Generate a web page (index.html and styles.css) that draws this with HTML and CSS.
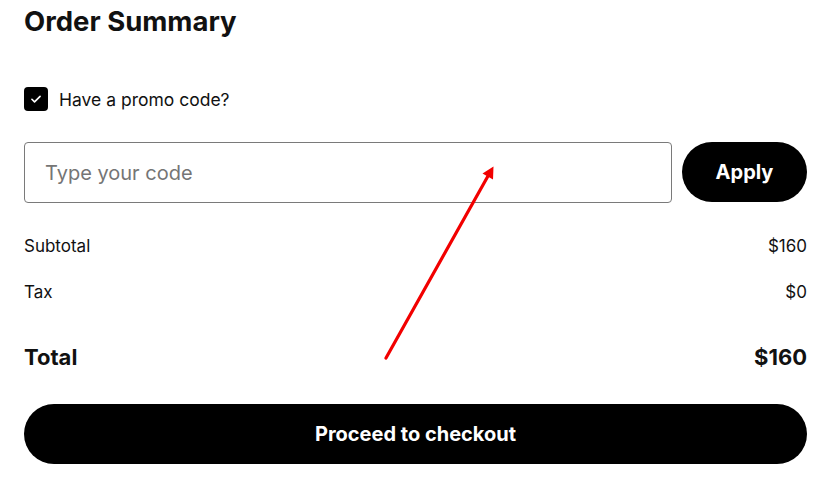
FILE: index.html
```html
<!DOCTYPE html>
<html lang="en">
<head>
<meta charset="utf-8">
<title>Order Summary</title>
<link rel="stylesheet" href="styles.css">
</head>
<body>
<main class="summary">
  <h1 class="title">Order Summary</h1>
  <label class="promo-toggle">
    <span class="check">
      <svg viewBox="0 0 24 24" width="14" height="14" aria-hidden="true"><path d="M5 12.5l4.5 4.5L19 7.5" fill="none" stroke="#fff" stroke-width="2.8" stroke-linecap="round" stroke-linejoin="round"/></svg>
    </span>
    <span class="promo-label">Have a promo code?</span>
  </label>
  <div class="promo-row">
    <input class="promo-input" type="text" placeholder="Type your code">
    <button class="apply-btn">Apply</button>
  </div>
  <div class="line"><span>Subtotal</span><span>$160</span></div>
  <div class="line line-tax"><span>Tax</span><span>$0</span></div>
  <div class="line total"><span>Total</span><span>$160</span></div>
  <button class="checkout-btn">Proceed to checkout</button>
</main>
<svg class="annotation" width="836" height="503" viewBox="0 0 836 503" aria-hidden="true">
  <line x1="386" y1="358" x2="488" y2="176" stroke="#f20000" stroke-width="3.2" stroke-linecap="round"/>
  <polygon points="493.5,166.5 482.5,173.5 493,179.5" fill="#f20000"/>
</svg>
</body>
</html>
```
FILE: styles.css
```css
* { box-sizing: border-box; }
html, body { margin: 0; padding: 0; background: #fff; }
body {
  font-family: Inter, "Noto Sans", "Liberation Sans", sans-serif;
  color: #111;
  width: 836px;
  height: 503px;
  overflow: hidden;
  position: relative;
}
.summary {
  padding: 5px 29px 0 24px;
  display: flex;
  flex-direction: column;
}
.title {
  margin: 0;
  font-size: 27.5px;
  line-height: 32px;
  font-weight: 700;
}
.promo-toggle {
  margin-top: 50px;
  display: flex;
  align-items: center;
  gap: 11px;
  height: 24px;
}
.check {
  width: 24px;
  height: 24px;
  border-radius: 4px;
  background: #000;
  display: flex;
  align-items: center;
  justify-content: center;
}
.promo-label {
  font-size: 17.5px;
  color: #111;
}
.promo-row {
  margin-top: 31px;
  display: flex;
  align-items: flex-start;
  gap: 10px;
}
.promo-input {
  flex: 1;
  height: 61px;
  border: 1px solid #7a7a7a;
  border-radius: 4px;
  padding: 0 20px;
  font-family: inherit;
  font-size: 20px;
  color: #111;
  background: #fff;
  outline: none;
}
.promo-input::placeholder { color: #757575; }
.apply-btn {
  width: 125px;
  height: 60px;
  border: 0;
  border-radius: 30px;
  background: #000;
  color: #fff;
  font-family: inherit;
  font-size: 20px;
  font-weight: 700;
}
.line {
  display: flex;
  justify-content: space-between;
  font-size: 17px;
  line-height: 24px;
  margin-top: 31px;
}
.line-tax { margin-top: 22px; }
.total {
  margin-top: 39px;
  font-size: 22px;
  font-weight: 700;
  line-height: 28px;
}
.checkout-btn {
  margin-top: 33px;
  height: 60px;
  border: 0;
  border-radius: 30px;
  background: #000;
  color: #fff;
  font-family: inherit;
  font-size: 20px;
  font-weight: 700;
}
.annotation {
  position: absolute;
  left: 0;
  top: 0;
  pointer-events: none;
}
```
